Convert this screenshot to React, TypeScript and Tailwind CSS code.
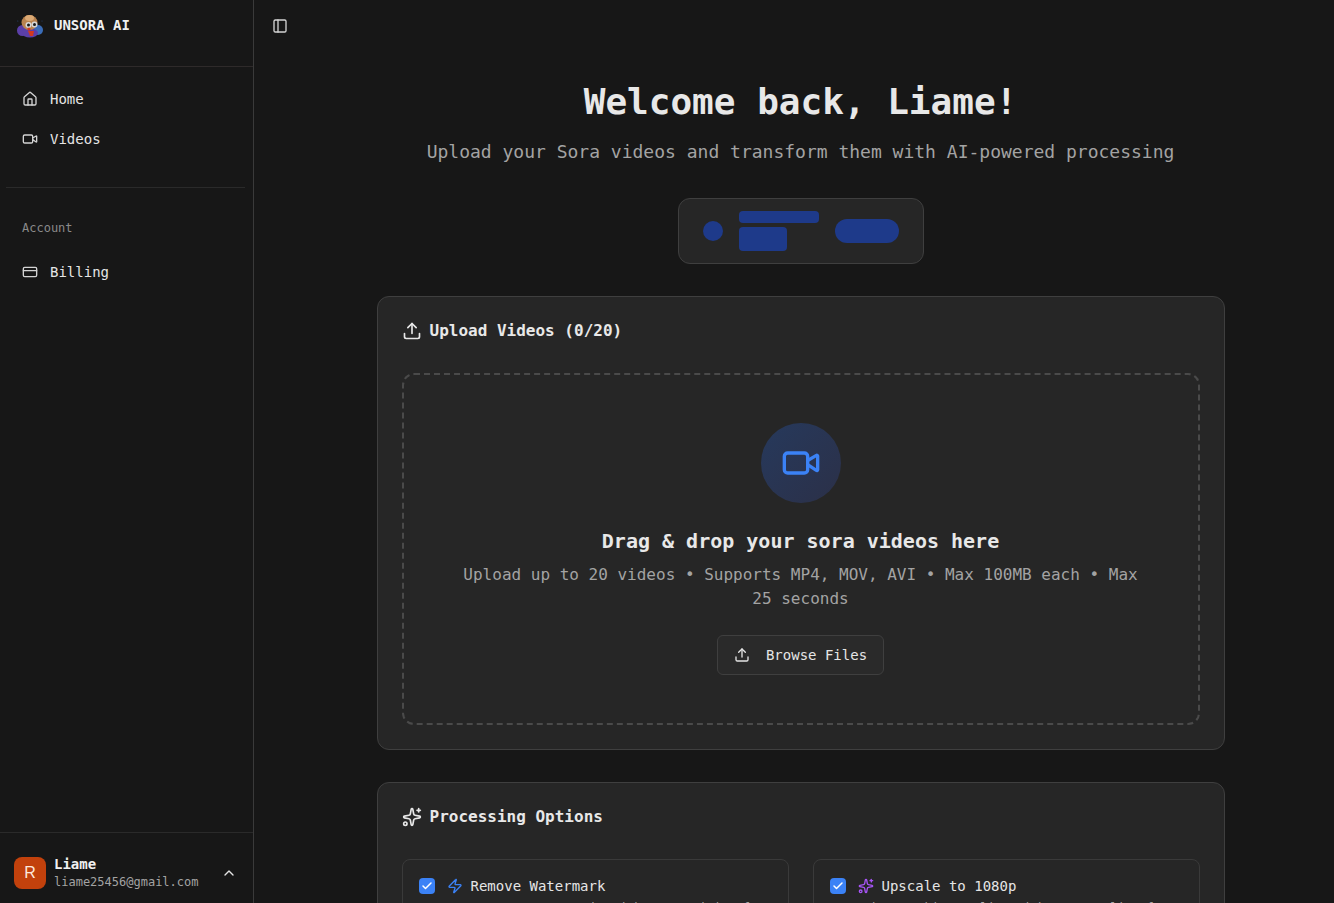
import React from 'react'
import { Home, Video, CreditCard, PanelLeft, ChevronUp, Upload, Sparkles, Zap, Check } from 'lucide-react'

const mono = "font-['DejaVu_Sans_Mono',monospace]"

const Mascot = () => (
  <svg width="26" height="24" viewBox="0 0 26 24" className="shrink-0">
    <ellipse cx="5.5" cy="16.5" rx="5.5" ry="5.5" fill="#5b3fa8" />
    <ellipse cx="21" cy="16" rx="5" ry="5" fill="#3a6cb8" />
    <ellipse cx="13" cy="19" rx="8" ry="4.5" fill="#5b3fa8" />
    <ellipse cx="12.5" cy="8.5" rx="8" ry="7.5" fill="#b9834f" />
    <ellipse cx="12.5" cy="4" rx="4.5" ry="3" fill="#dba974" />
    <circle cx="11.5" cy="11" r="3" fill="#d8d8d8" />
    <circle cx="17.5" cy="10.5" r="3" fill="#d8d8d8" />
    <circle cx="11.5" cy="11" r="1.5" fill="#1c1c1c" />
    <circle cx="17.5" cy="10.5" r="1.5" fill="#1c1c1c" />
    <circle cx="12" cy="15" r="1.6" fill="#d2381f" />
    <path d="M11 17h6l-1 5h-3z" fill="#d2381f" />
    <circle cx="0.8" cy="7" r="0.5" fill="#2b4a80" />
    <circle cx="25" cy="7" r="0.5" fill="#2b4a80" />
  </svg>
)

const NavItem = ({ icon, label }: { icon: React.ReactNode; label: string }) => (
  <div className="flex h-10 items-center gap-[12px] pl-[22px] text-sm text-[#e5e5e5]">
    {icon}
    <span>{label}</span>
  </div>
)

const OptionCard = ({ icon, title, desc }: { icon: React.ReactNode; title: string; desc: string }) => (
  <div className="rounded-lg border border-[#3a3a3a] px-4 pt-4 pb-4">
    <div className="flex items-center gap-3">
      <div className="flex size-4 items-center justify-center rounded-[4px] bg-[#3b82f6]">
        <Check size={12} strokeWidth={3} className="text-white" />
      </div>
      <div className="flex items-center gap-2 text-sm text-[#e5e5e5]">
        {icon}
        <span>{title}</span>
      </div>
    </div>
    <p className="mt-1 pl-7 text-xs text-[#a3a3a3]">{desc}</p>
  </div>
)

export default function App() {
  return (
    <div className={`flex h-screen overflow-hidden bg-[#171717] text-white ${mono}`}>
      {/* Sidebar */}
      <aside className="flex w-[254px] shrink-0 flex-col border-r border-[#3a3a3a]">
        <div className="flex h-[67px] shrink-0 items-start gap-[11px] border-b border-[#2e2a2a] pl-[17px] pt-[14px]">
          <Mascot />
          <span className="mt-px text-sm font-bold leading-5 text-[#f0f0f0]">UNSORA AI</span>
        </div>
        <nav className="mr-[8px] ml-[6px] border-b border-[#2a2a2a] pt-[12px] pb-[28px]">
          <div className="-ml-[6px]">
            <NavItem icon={<Home size={16} className="text-[#d4d4d4]" />} label="Home" />
            <NavItem icon={<Video size={16} className="text-[#d4d4d4]" />} label="Videos" />
          </div>
        </nav>
        <div className="pt-[32px] pl-[22px] text-xs leading-4 text-[#8a8a8a]">Account</div>
        <div className="mt-[16px]">
          <NavItem icon={<CreditCard size={16} className="text-[#d4d4d4]" />} label="Billing" />
        </div>
        <div className="mt-auto flex h-[71px] items-start border-t border-[#2a2a2a] pl-[14px] pr-[16px] pt-6">
          <div className="flex size-8 items-center justify-center rounded-lg bg-[#c2410c] font-['Liberation_Sans',sans-serif] text-base text-[#fde8dc]">
            R
          </div>
          <div className="-mt-[3px] ml-2 min-w-0 flex-1">
            <div className="text-sm leading-5 font-bold text-[#f0f0f0]">Liame</div>
            <div className="text-xs leading-4 text-[#a3a3a3]">liame25456@gmail.com</div>
          </div>
          <ChevronUp size={16} className="mt-2 text-[#e5e5e5]" />
        </div>
      </aside>

      {/* Main */}
      <main className="min-w-0 flex-1 overflow-hidden">
        <div className="flex h-[52px] items-center pl-[18px]">
          <PanelLeft size={16} className="text-[#d4d4d4]" />
        </div>
        <div className="pl-[13px]">
          <div className="mx-auto w-[848px]">
            <div className="pt-[30px] text-center">
              <h1 className="text-4xl leading-10 font-bold text-[#e8e8e8]">Welcome back, Liame!</h1>
              <p className="mt-[16px] text-lg leading-7 text-[#a3a3a3]">
                Upload your Sora videos and transform them with AI-powered processing
              </p>
            </div>

            {/* Placeholder banner */}
            <div className="mx-auto mt-[32px] flex h-[66px] w-[246px] items-center rounded-xl border border-[#3f3f3f] bg-[#262626] pl-6">
              <div className="size-5 rounded-full bg-[#1e3a8a]" />
              <div className="ml-[16px] flex w-[80px] flex-col gap-1">
                <div className="h-3 w-20 rounded bg-[#1e3a8a]" />
                <div className="h-6 w-12 rounded bg-[#1e3a8a]" />
              </div>
              <div className="ml-4 h-6 w-16 rounded-full bg-[#1e3a8a]" />
            </div>

            {/* Upload card */}
            <section className="mt-8 rounded-xl border border-[#3f3f3f] bg-[#262626] px-6 pt-6 pb-6">
              <div className="flex items-center gap-2 font-bold text-[#e8e8e8]">
                <Upload size={20} />
                <span className="leading-5">Upload Videos (0/20)</span>
              </div>
              <div className="mt-[32px] flex h-[352px] flex-col items-center rounded-xl border-2 border-dashed border-[#4a4a4a] pt-[48px]">
                <div className="flex size-20 items-center justify-center rounded-full bg-gradient-to-br from-[#26395c] to-[#2b3048]">
                  <Video size={40} strokeWidth={2} className="text-[#3b82f6]" />
                </div>
                <h3 className="mt-6 text-xl leading-7 font-bold text-[#e8e8e8]">Drag &amp; drop your sora videos here</h3>
                <p className="mt-[8px] w-[700px] text-center leading-6 text-[#a3a3a3]">
                  Upload up to 20 videos • Supports MP4, MOV, AVI • Max 100MB each • Max 25 seconds
                </p>
                <button className="mt-6 flex h-10 w-[167px] items-center justify-center gap-4 rounded-md border border-[#3f3f3f] bg-[#2a2a2a] text-sm text-[#e5e5e5]">
                  <Upload size={16} />
                  Browse Files
                </button>
              </div>
            </section>

            {/* Options card */}
            <section className="mt-8 rounded-xl border border-[#3f3f3f] bg-[#262626] px-6 pt-6 pb-6">
              <div className="flex items-center gap-2 font-bold text-[#e8e8e8]">
                <Sparkles size={20} />
                <span className="leading-5">Processing Options</span>
              </div>
              <div className="mt-[32px] grid grid-cols-2 gap-6">
                <OptionCard
                  icon={<Zap size={16} className="text-[#3b82f6]" />}
                  title="Remove Watermark"
                  desc="Remove Sora watermarks with AI precision for clean results"
                />
                <OptionCard
                  icon={<Sparkles size={16} className="text-[#a855f7]" />}
                  title="Upscale to 1080p"
                  desc="Enhance video quality with AI upscaling for better clarity"
                />
              </div>
            </section>
          </div>
        </div>
      </main>
    </div>
  )
}
